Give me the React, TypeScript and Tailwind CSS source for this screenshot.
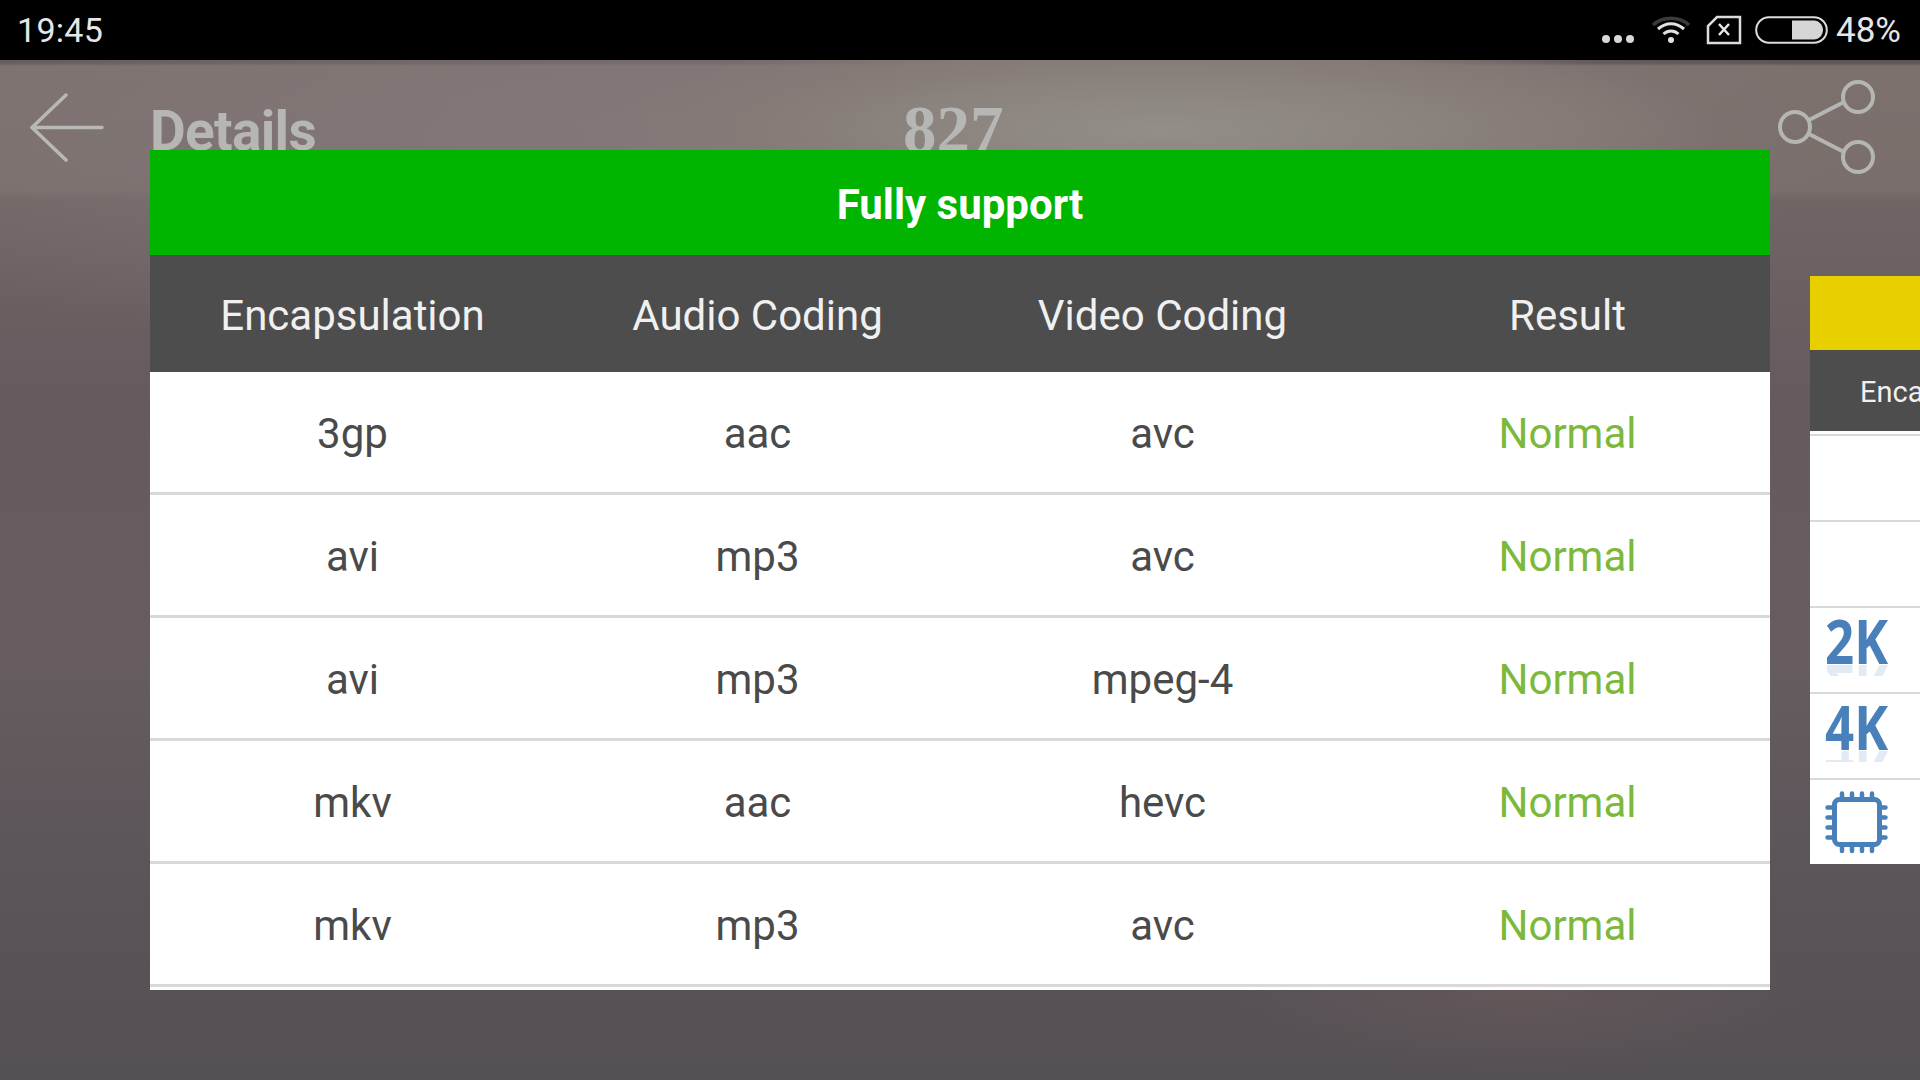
const rows = [
  ["3gp", "aac", "avc"],
  ["avi", "mp3", "avc"],
  ["avi", "mp3", "mpeg-4"],
  ["mkv", "aac", "hevc"],
  ["mkv", "mp3", "avc"],
];

const headers = ["Encapsulation", "Audio Coding", "Video Coding", "Result"];

function StatusIcons() {
  return (
    <div className="flex items-center">
      <svg width="32" height="10" viewBox="0 0 32 10" className="mt-[18px]">
        <circle cx="4" cy="5" r="4" fill="#d8d8d8" />
        <circle cx="16" cy="5" r="4" fill="#d8d8d8" />
        <circle cx="28" cy="5" r="4" fill="#d8d8d8" />
      </svg>
      <svg width="40" height="30" viewBox="0 0 40 30" className="ml-[17px]">
        <path d="M2 10 C12 1 28 1 38 10" fill="none" stroke="#3a3a3a" strokeWidth="3.5" />
        <path d="M7 14 C15 7 25 7 33 14" fill="none" stroke="#e2e2e2" strokeWidth="3" />
        <path d="M12.5 19 C17 15 23 15 27.5 19" fill="none" stroke="#e2e2e2" strokeWidth="3" />
        <circle cx="20" cy="25" r="3" fill="#e2e2e2" />
      </svg>
      <svg width="36" height="30" viewBox="0 0 36 30" className="ml-[15px]">
        <path d="M11 2 H34 V28 H2 V11 Z" fill="none" stroke="#dcdcdc" strokeWidth="2.5" />
        <path d="M13 9 L23 20 M23 9 L13 20" stroke="#e8e8e8" strokeWidth="2.5" />
      </svg>
      <svg width="74" height="28" viewBox="0 0 74 28" className="ml-[13px]">
        <rect x="1.2" y="1.2" width="70.6" height="25.6" rx="12.8" fill="none" stroke="#dcdcdc" strokeWidth="2" />
        <path d="M37 4.5 H59 C64 4.5 68 9 68 14 C68 19 64 23.5 59 23.5 H37 Z" fill="#d6d6d6" />
      </svg>
      <span className="ml-[7px] font-['Roboto',sans-serif] text-[35px] leading-none text-[#e6e6e6]">48%</span>
    </div>
  );
}

function ShareIcon() {
  return (
    <svg width="100" height="100" viewBox="0 0 100 100" fill="none" stroke="#b4b6b3" strokeWidth="4">
      <circle cx="17" cy="47" r="15" />
      <circle cx="80" cy="17" r="15" />
      <circle cx="80" cy="77" r="15" />
      <path d="M31 40 L66 22 M31 54 L66 72" />
    </svg>
  );
}

function ChipIcon() {
  return (
    <svg width="63" height="63" viewBox="0 0 63 63" fill="none" stroke="#4a80ba">
      <rect x="9.5" y="8.5" width="45" height="45" rx="5" strokeWidth="5" />
      <path
        strokeWidth="4.5"
        strokeLinecap="round"
        d="M17 2.5 V7 M27 2.5 V7 M37 2.5 V7 M47 2.5 V7 M17 55 V60 M27 55 V60 M37 55 V60 M47 55 V60 M2.5 16.5 H8 M2.5 26.5 H8 M2.5 36.5 H8 M2.5 46.5 H8 M56 16.5 H60.5 M56 26.5 H60.5 M56 36.5 H60.5 M56 46.5 H60.5"
      />
    </svg>
  );
}

function Badge({ label }: { label: string }) {
  return (
    <div className="h-[60px] w-[80px] origin-left scale-x-[0.85] font-['Open_Sans',sans-serif] text-[60px] leading-none font-bold text-[#4a80ba] [-webkit-box-reflect:below_-13px_linear-gradient(transparent_70%,rgba(0,0,0,0.16)_70%)]">
      {label}
    </div>
  );
}

export default function App() {
  return (
    <div className="relative h-[1080px] w-[1920px] overflow-hidden bg-[#5a5357] font-['Roboto',sans-serif]">
      <div className="absolute inset-0 bg-[radial-gradient(ellipse_560px_105px_at_1160px_130px,#938e89_0%,#8d8680_35%,#847a76_75%,transparent_100%),radial-gradient(ellipse_1100px_220px_at_760px_140px,#83797a_0%,transparent_100%),radial-gradient(ellipse_280px_80px_at_1520px_990px,#635759_0%,transparent_100%),linear-gradient(180deg,#5d5558_60px,#5d5558_63px,#7c716d_66px,#796e6b_190px,#6f6564_200px,#655b5f_400px,#675d60_650px,#5c5559_850px,#555055_1080px)]" />

      <div className="relative flex h-[60px] items-center justify-between bg-black pl-[17px] pr-[19px]">
        <span className="text-[34px] leading-none tracking-[0.3px] text-[#e6e6e6]">19:45</span>
        <StatusIcons />
      </div>

      <div className="relative flex h-[135px] items-start pl-[30px] pr-[42px]">
        <svg width="74" height="69" viewBox="0 0 74 69" className="mt-[33px]" fill="none" stroke="#b8b9b6" strokeWidth="3.5" strokeLinecap="round">
          <path d="M36 2 L2 34.5 L36 67 M2 34.5 H72" />
        </svg>
        <span className="ml-[46px] mt-[44px] text-[55px] leading-none font-bold tracking-[-0.7px] text-[#b6b7b5]">Details</span>
        <span className="ml-[587px] mt-[36px] font-['Liberation_Serif',serif] text-[67px] leading-none font-bold text-[#b6b7b5]">827</span>
        <div className="ml-auto mt-[20px]"><ShareIcon /></div>
      </div>

      <div className="absolute left-[150px] top-[150px] w-[1620px] bg-white">
        <div className="flex h-[105px] items-center justify-center bg-[#00b400] pt-[3px] text-[42px] font-bold text-white">Fully support</div>
        <div className="grid h-[117px] grid-cols-4 items-center bg-[#4d4d4d] pt-[3px] text-[42px] text-[#f0f0f0]">
          {headers.map((h) => (
            <div key={h} className="text-center">{h}</div>
          ))}
        </div>
        {rows.map((row, i) => (
          <div key={i} className="grid h-[123px] grid-cols-4 items-center border-b-[3px] border-[#d9d9d9] pt-[3px] text-[42px] text-[#4a4a4a]">
            {row.map((cell, j) => (
              <div key={j} className="text-center">{cell}</div>
            ))}
            <div className="text-center text-[#7cb93a]">Normal</div>
          </div>
        ))}
        <div className="h-[3px]" />
      </div>

      <div className="absolute left-[1810px] top-[276px] w-[110px] overflow-hidden bg-white">
        <div className="h-[74px] bg-[#e8cf00]" />
        <div className="flex h-[81px] items-center whitespace-nowrap bg-[#4d4d4d] pl-[50px] pt-[4px] text-[29px] text-[#f0f0f0]">Encapsulation</div>
        <div className="h-[5px] border-b-2 border-[#d9d9d9]" />
        <div className="h-[86px] border-b-2 border-[#d9d9d9]" />
        <div className="h-[86px] border-b-2 border-[#d9d9d9]" />
        <div className="h-[86px] border-b-2 border-[#d9d9d9] pl-[15px] pt-[3px]"><Badge label="2K" /></div>
        <div className="h-[86px] border-b-2 border-[#d9d9d9] pl-[15px] pt-[3px]"><Badge label="4K" /></div>
        <div className="h-[84px] pl-[15px] pt-[11px]"><ChipIcon /></div>
      </div>
    </div>
  );
}
